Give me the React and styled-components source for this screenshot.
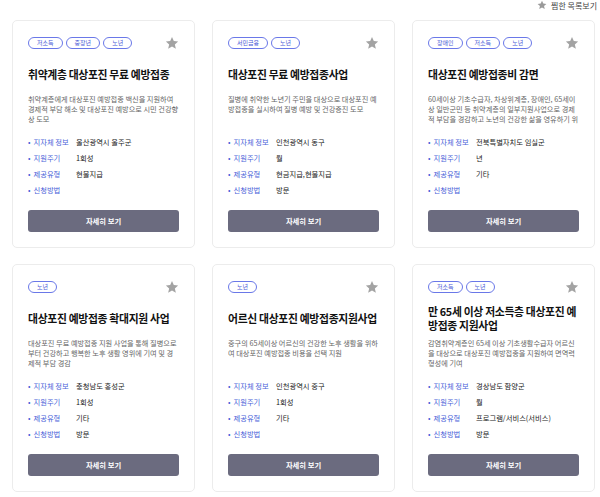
import React from 'react'
import styled, { createGlobalStyle } from 'styled-components'

const GlobalStyle = createGlobalStyle`
  html, body { margin: 0; padding: 0; background: #fff; }
  body { font-family: "Noto Sans CJK KR", "Noto Sans", sans-serif; color: #222; }
  * { box-sizing: border-box; }
`

const items = [
  {
    tags: ['저소득', '중장년', '노년'],
    title: '취약계층 대상포진 무료 예방접종',
    desc: '취약계층에게 대상포진 예방접종 백신을 지원하여 경제적 부담 해소 및 대상포진 예방으로 시민 건강향상 도모',
    region: '울산광역시 울주군',
    cycle: '1회성',
    type: '현물지급',
    method: '',
  },
  {
    tags: ['서민금융', '노년'],
    title: '대상포진 무료 예방접종사업',
    desc: '질병에 취약한 노년기 주민을 대상으로 대상포진 예방접종을 실시하여 질병 예방 및 건강증진 도모',
    region: '인천광역시 동구',
    cycle: '월',
    type: '현금지급,현물지급',
    method: '방문',
  },
  {
    tags: ['장애인', '저소득', '노년'],
    title: '대상포진 예방접종비 감면',
    desc: '60세이상 기초수급자, 차상위계층, 장애인, 65세이상 일반군민 등 취약계층의 일부지원사업으로 경제적 부담을 경감하고 노년의 건강한 삶을 영유하기 위',
    region: '전북특별자치도 임실군',
    cycle: '년',
    type: '기타',
    method: '',
  },
  {
    tags: ['노년'],
    title: '대상포진 예방접종 확대지원 사업',
    desc: '대상포진 무료 예방접종 지원 사업을 통해 질병으로부터 건강하고 행복한 노후 생활 영위에 기여 및 경제적 부담 경감',
    region: '충청남도 홍성군',
    cycle: '1회성',
    type: '기타',
    method: '방문',
  },
  {
    tags: ['노년'],
    title: '어르신 대상포진 예방접종지원사업',
    desc: '중구의 65세이상 어르신의 건강한 노후 생활을 위하여 대상포진 예방접종 비용을 선택 지원',
    region: '인천광역시 중구',
    cycle: '1회성',
    type: '기타',
    method: '',
  },
  {
    tags: ['저소득', '노년'],
    title: '만 65세 이상 저소득층 대상포진 예방접종 지원사업',
    desc: '감염취약계층인 65세 이상 기초생활수급자 어르신을 대상으로 대상포진 예방접종을 지원하여 면역력 형성에 기여',
    region: '경상남도 함양군',
    cycle: '월',
    type: '프로그램/서비스(서비스)',
    method: '방문',
  },
]

function Star({ size = 12, color = '#a3a3a3' }) {
  return (
    <svg width={size} height={size} viewBox="0 0 24 24">
      <path
        fill={color}
        d="M12 1.8l3.1 6.9 7.4.7-5.6 5 1.7 7.4L12 17.9l-6.6 3.9 1.7-7.4-5.6-5 7.4-.7z"
      />
    </svg>
  )
}

function Card({ item }) {
  const rows = [
    ['지자체 정보', item.region],
    ['지원주기', item.cycle],
    ['제공유형', item.type],
    ['신청방법', item.method],
  ]
  return (
    <CardBox>
      <TopRow>
        <Tags>
          {item.tags.map((t) => (
            <Tag key={t}>{t}</Tag>
          ))}
        </Tags>
        <Star size={14} />
      </TopRow>
      <TitleBox>
        <Title>{item.title}</Title>
      </TitleBox>
      <DescBox>
        <Desc>{item.desc}</Desc>
      </DescBox>
      <InfoList>
        {rows.map(([k, v]) => (
          <InfoRow key={k}>
            <Label>{k}</Label>
            <Value>{v}</Value>
          </InfoRow>
        ))}
      </InfoList>
      <DetailButton>자세히 보기</DetailButton>
    </CardBox>
  )
}

export default function App() {
  return (
    <Page>
      <GlobalStyle />
      <Header>
        <FavLink>
          <Star size={10} color="#9a9a9a" />
          찜한 목록보기
        </FavLink>
      </Header>
      <Grid>
        {items.map((item) => (
          <Card key={item.title} item={item} />
        ))}
      </Grid>
    </Page>
  )
}

const Page = styled.div`
  width: 600px;
  padding: 0 3px 0 12px;
`

const Header = styled.div`
  display: flex;
  justify-content: flex-end;
  height: 20px;
`

const FavLink = styled.div`
  display: flex;
  align-items: center;
  gap: 4px;
  height: 10px;
  font-size: 8px;
  color: #444;
`

const Grid = styled.div`
  display: grid;
  grid-template-columns: repeat(3, 183px);
  column-gap: 17px;
  row-gap: 16px;
`

const CardBox = styled.div`
  background: #fff;
  border: 1px solid #ececec;
  border-radius: 5px;
  padding: 16px 15px 15px;
  display: flex;
  flex-direction: column;
`

const TopRow = styled.div`
  display: flex;
  align-items: center;
  justify-content: space-between;
  height: 12px;
`

const Tags = styled.div`
  display: flex;
  gap: 3px;
`

const Tag = styled.span`
  display: inline-flex;
  align-items: center;
  height: 12px;
  padding: 0 8px;
  border: 1px solid #6a78e8;
  border-radius: 6px;
  font-size: 6px;
  color: #4b5bd6;
  line-height: 1;
`

const TitleBox = styled.div`
  height: 28px;
  margin-top: 11px;
  display: flex;
  align-items: center;
`

const Title = styled.h3`
  margin: 0;
  font-size: 10.8px;
  font-weight: 700;
  line-height: 14px;
  color: #111;
  letter-spacing: -0.3px;
  word-break: break-all;
`

const DescBox = styled.div`
  margin-top: 6px;
  height: 30px;
`

const Desc = styled.p`
  margin: 0;
  font-size: 7.2px;
  line-height: 10px;
  color: #666;
  word-break: break-all;
  display: -webkit-box;
  -webkit-line-clamp: 3;
  -webkit-box-orient: vertical;
  overflow: hidden;
`

const InfoList = styled.ul`
  list-style: none;
  margin: 10px 0 0;
  padding: 0;
  display: flex;
  flex-direction: column;
`

const InfoRow = styled.li`
  display: flex;
  align-items: center;
  height: 16px;
  font-size: 7.3px;
`

const Label = styled.span`
  width: 48px;
  flex-shrink: 0;
  color: #4a5fd9;
  &::before {
    content: '•';
    margin-right: 3px;
  }
`

const Value = styled.span`
  color: #222;
`

const DetailButton = styled.button`
  margin-top: 12px;
  height: 22px;
  width: 100%;
  border: 0;
  border-radius: 3px;
  background: #6b6b7f;
  color: #fff;
  font-family: inherit;
  font-size: 7.3px;
  font-weight: 700;
  cursor: pointer;
`
